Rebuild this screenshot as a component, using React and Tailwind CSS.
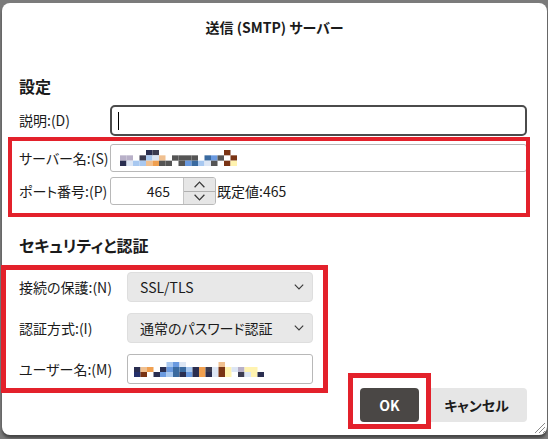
import React from "react";

const FONT = { fontFamily: "'Noto Sans CJK JP', 'Noto Sans', sans-serif" };

// pixelated (redacted) text, one string per row; each char maps to a colour
const PAL = {
  ".": null,
  n: "#2a2e50",
  d: "#3c3c50",
  g: "#555555",
  b: "#6a9ae0",
  B: "#3a6aa0",
  l: "#a8c8f0",
  w: "#dde6f4",
  o: "#f0a050",
  O: "#f0c090",
  r: "#7a3414",
  y: "#fff3b0",
  p: "#b8b0c8",
};

const serverRows = [
  "....nd..........r.",
  "pp.dlwO.gggg.Bbg.r",
  "nwllOogg.gbBlwg.ry",
];

const userRows = [
  ".....lbw.....O......",
  "nOo.nbBBlnodwrywpyy.",
  "Dr.nblBnbnonwry.dwyn",
];

function Mosaic({ rows, width, height }) {
  const cols = rows[0].length;
  return (
    <svg width={width} height={height} viewBox={`0 0 ${cols} 3`} preserveAspectRatio="none" className="block">
      {rows.map((row, r) =>
        row.split("").map((ch, c) => {
          const fill = ch === "D" ? "#24306a" : PAL[ch];
          return fill ? <rect key={`${r}-${c}`} x={c} y={r} width="1" height="1" fill={fill} /> : null;
        })
      )}
    </svg>
  );
}

function Chevron({ up = false, w = 10, h = 6 }) {
  return (
    <svg width={w} height={h} viewBox="0 0 10 6" fill="none">
      <path
        d={up ? "M0.8 5.4 L5 1 L9.2 5.4" : "M0.8 0.6 L5 5 L9.2 0.6"}
        stroke="#3a3a3a"
        strokeWidth="1.1"
      />
    </svg>
  );
}

function Select({ value }) {
  return (
    <div className="w-[186px] h-[30px] flex items-center justify-between pl-[12px] pr-[8px] rounded-[4px] bg-[#e8e8e8] border border-[#dedede] text-[14px] text-[#1b1b1b]">
      <span>{value}</span>
      <Chevron />
    </div>
  );
}

export default function App() {
  return (
    <div
      className="w-[548px] h-[439px] overflow-hidden bg-[#7b7b7b] pt-[3px] pl-[2px] [font-feature-settings:'palt']"
      style={FONT}
    >
      <div className="relative w-[545px] h-[432px] rounded-[8px] bg-white shadow-[0_3px_3px_rgba(0,0,0,0.45)] text-[#1b1b1b]">
        {/* title */}
        <div className="h-[48px] flex items-center justify-center text-[14px] font-bold">
          送信 (SMTP) サーバー
        </div>

        <div className="pl-[17px] pr-[20px]">
          <div className="mt-[23px] h-[24px] flex items-center text-[16px] font-bold">設定</div>

          {/* 説明 */}
          <div className="mt-[7px] flex items-center text-[14px]">
            <span className="w-[91px]">説明:(D)</span>
            <div className="flex-1 h-[31px] rounded-[5px] border-2 border-[#4b4b4b] flex items-center pl-[6px]">
              <span className="w-px h-[18px] bg-black" />
            </div>
          </div>

          {/* サーバー名 */}
          <div className="mt-[8px] flex items-center text-[14px]">
            <span className="w-[91px]">サーバー名:(S)</span>
            <div className="flex-1 h-[28px] rounded-[3px] border border-[#b8b8b8] flex items-center pl-[9px]">
              <Mosaic rows={serverRows} width={117} height={16} />
            </div>
          </div>

          {/* ポート番号 */}
          <div className="mt-[5px] flex items-center text-[14px]">
            <span className="w-[91px]">ポート番号:(P)</span>
            <div className="w-[106px] h-[28px] rounded-[3px] border border-[#b8b8b8] flex overflow-hidden">
              <div className="flex-1 flex items-center justify-end pr-[13px]">465</div>
              <div className="w-[32px] flex flex-col bg-[#e6e6e6] border-l border-[#c4c4c4]">
                <div className="flex-1 flex items-center justify-center border-b border-[#b0b0b0]">
                  <Chevron up w={13} h={7} />
                </div>
                <div className="flex-1 flex items-center justify-center">
                  <Chevron w={13} h={7} />
                </div>
              </div>
            </div>
            <span className="ml-[1px]">既定値:465</span>
          </div>

          <div className="mt-[28px] h-[24px] flex items-center text-[16px] font-bold">セキュリティと認証</div>

          <div className="mt-[15px] flex items-center text-[14px]">
            <span className="w-[108px]">接続の保護:(N)</span>
            <Select value="SSL/TLS" />
          </div>
          <div className="mt-[11px] flex items-center text-[14px]">
            <span className="w-[108px]">認証方式:(I)</span>
            <Select value="通常のパスワード認証" />
          </div>
          <div className="mt-[11px] flex items-center text-[14px]">
            <span className="w-[108px]">ユーザー名:(M)</span>
            <div className="w-[186px] h-[30px] rounded-[3px] border border-[#b8b8b8] flex items-center pl-[6px]">
              <Mosaic rows={userRows} width={130} height={15} />
            </div>
          </div>

          {/* buttons */}
          <div className="mt-[4px] flex justify-end gap-[7px] text-[14px] font-bold">
            <button className="w-[59px] h-[34px] rounded-[4px] bg-[#4a4745] text-white">OK</button>
            <button className="w-[101px] h-[34px] rounded-[4px] bg-[#e6e6e6] text-[#1b1b1b]">キャンセル</button>
          </div>
        </div>

        {/* resize grip */}
        <svg className="absolute right-[1px] bottom-[1px]" width="14" height="14" viewBox="0 0 14 14">
          <path d="M13 3 L3 13 M13 7 L7 13 M13 11 L11 13" stroke="#8a8a8a" strokeWidth="1" />
        </svg>

        {/* red annotation frames */}
        <div className="absolute left-[6px] top-[134px] w-[522px] h-[80px] border-4 border-[#e3212b]" />
        <div className="absolute left-[-1px] top-[262px] w-[327px] h-[128px] border-[5px] border-[#e3212b]" />
        <div className="absolute left-[346px] top-[370px] w-[83px] h-[56px] border-[5px] border-[#e3212b]" />
      </div>
    </div>
  );
}
